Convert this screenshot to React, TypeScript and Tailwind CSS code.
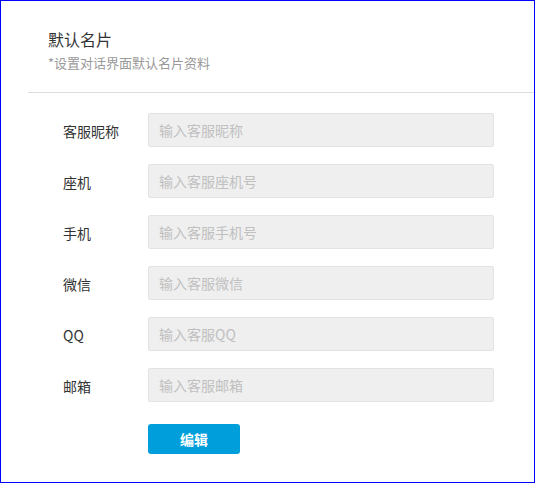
const fields = [
  { label: "客服昵称", placeholder: "输入客服昵称" },
  { label: "座机", placeholder: "输入客服座机号" },
  { label: "手机", placeholder: "输入客服手机号" },
  { label: "微信", placeholder: "输入客服微信" },
  { label: "QQ", placeholder: "输入客服QQ" },
  { label: "邮箱", placeholder: "输入客服邮箱" },
];

export default function App() {
  return (
    <div
      className="h-[483px] w-[535px] border border-[#0000ff] bg-white"
      style={{ fontFamily: '"Noto Sans CJK SC", "Noto Sans", sans-serif' }}
    >
      <div className="pl-[47px] pt-[26px]">
        <h1 className="text-[16px] leading-6 text-[#333]">默认名片</h1>
        <p className="mt-[4px] text-[13px] leading-4 text-[#999]">*设置对话界面默认名片资料</p>
      </div>
      <div className="ml-[27px] mt-[21px] h-px bg-[#dddddd]" />

      <div className="mt-[20px] flex flex-col gap-[17px]">
        {fields.map((f) => (
          <div key={f.label} className="flex items-center">
            <label className="w-[147px] pl-[62px] pt-[3px] text-[14px] text-[#333]">{f.label}</label>
            <input
              type="text"
              placeholder={f.placeholder}
              className="h-[34px] w-[346px] rounded-[2px] border border-[#e3e3e3] bg-[#efefef] px-[10px] text-[14px] outline-none placeholder:text-[#c0c0c0]"
            />
          </div>
        ))}
      </div>

      <div className="mt-[22px] pl-[147px]">
        <button
          type="button"
          className="h-[30px] w-[92px] rounded-[3px] bg-[#009fdb] text-[14px] font-bold text-white"
        >
          编辑
        </button>
      </div>
    </div>
  );
}
